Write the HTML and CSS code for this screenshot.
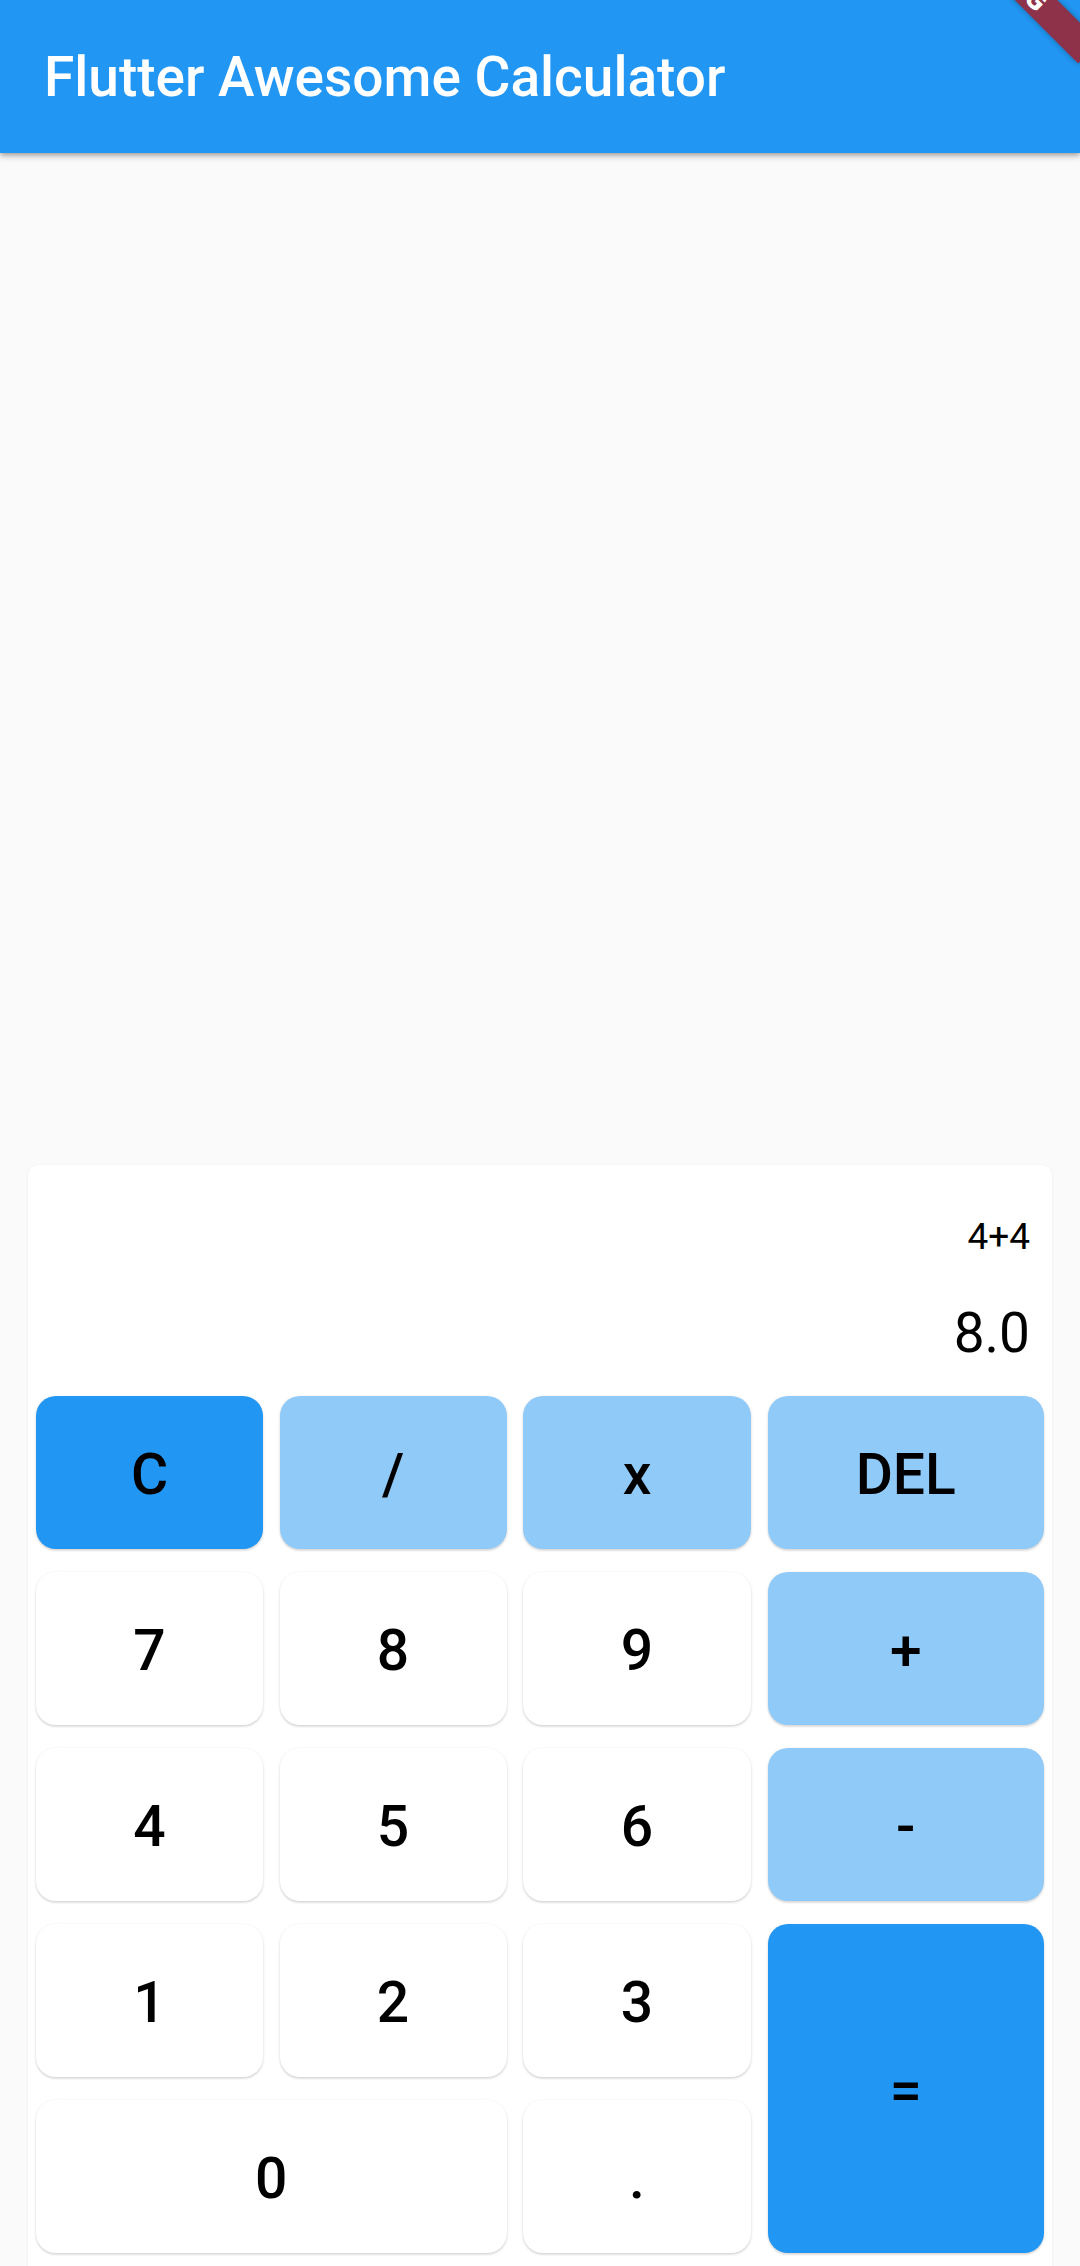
FILE: index.html
```html
<!DOCTYPE html>
<html lang="en">
<head>
<meta charset="utf-8">
<title>Flutter Awesome Calculator</title>
<link rel="stylesheet" href="styles.css">
</head>
<body>
<div class="screen">
  <header class="appbar">
    <h1 class="title">Flutter Awesome Calculator</h1>
  </header>
  <main class="content">
    <section class="calc">
      <div class="display">
        <div class="equation">4+4</div>
        <div class="result">8.0</div>
      </div>
      <div class="keys">
        <button class="key key-strong">C</button>
        <button class="key key-light">/</button>
        <button class="key key-light">x</button>
        <button class="key key-light">DEL</button>
        <button class="key">7</button>
        <button class="key">8</button>
        <button class="key">9</button>
        <button class="key key-light">+</button>
        <button class="key">4</button>
        <button class="key">5</button>
        <button class="key">6</button>
        <button class="key key-light">-</button>
        <button class="key">1</button>
        <button class="key">2</button>
        <button class="key">3</button>
        <button class="key key-strong key-tall">=</button>
        <button class="key key-wide">0</button>
        <button class="key">.</button>
      </div>
    </section>
  </main>
  <div class="debug-banner"><span>DEBUG</span></div>
</div>
</body>
</html>
```
FILE: styles.css
```css
* { box-sizing: border-box; }
html, body {
  margin: 0;
  padding: 0;
  background: #fafafa;
}
.screen {
  position: relative;
  width: 1080px;
  height: 2266px;
  overflow: hidden;
  display: flex;
  flex-direction: column;
  font-family: Roboto, "Noto Sans", "Liberation Sans", sans-serif;
  background: #fafafa;
}
.appbar {
  position: relative;
  z-index: 2;
  height: 153px;
  flex: 0 0 153px;
  background: #2196f3;
  display: flex;
  align-items: center;
  padding: 0 44px;
  box-shadow: 0 2px 4px -1px rgba(0,0,0,0.2), 0 4px 5px 0 rgba(0,0,0,0.14), 0 1px 10px 0 rgba(0,0,0,0.12);
}
.title {
  margin: 0;
  color: #ffffff;
  font-size: 55px;
  font-weight: 500;
  line-height: 64px;
  letter-spacing: 0;
}
.content {
  flex: 1 1 auto;
  display: flex;
  flex-direction: column;
}
.calc {
  margin: auto 28px 0;
  background: #ffffff;
  border-radius: 11px 11px 0 0;
  box-shadow: 0 1px 3px rgba(0,0,0,0.08);
  padding: 51px 8px 13px;
}
.display {
  display: flex;
  flex-direction: column;
  align-items: flex-end;
  padding-right: 14px;
}
.equation {
  font-size: 37px;
  line-height: 42px;
  color: #000;
}
.result {
  margin-top: 43px;
  font-size: 55px;
  line-height: 64px;
  color: #000;
}
.keys {
  margin-top: 31px;
  display: grid;
  grid-template-columns: 227px 227px 228px 1fr;
  grid-auto-rows: 153px;
  column-gap: 16.5px;
  row-gap: 23px;
}
.key {
  border: none;
  margin: 0;
  padding: 4px 0 0;
  border-radius: 20px;
  background: #ffffff;
  color: #000;
  font-family: Roboto, "Noto Sans", "Liberation Sans", sans-serif;
  font-size: 57px;
  font-weight: 500;
  line-height: 1;
  display: flex;
  align-items: center;
  justify-content: center;
  box-shadow: 0 1px 3px rgba(0,0,0,0.14), 0 2px 2px rgba(0,0,0,0.06);
}
.key-light { background: #90caf9; }
.key-strong { background: #2196f3; }
.key-tall { grid-row: span 2; }
.key-wide { grid-column: span 2; }
.debug-banner {
  position: absolute;
  z-index: 5;
  left: 901px;
  top: -40px;
  width: 220px;
  height: 30px;
  background: #8e3249;
  transform: rotate(45deg);
  display: flex;
  align-items: center;
  justify-content: center;
  box-shadow: 0 0 6px rgba(0,0,0,0.3);
}
.debug-banner span {
  color: #ffffff;
  font-family: Roboto, "Noto Sans", sans-serif;
  font-weight: 900;
  font-size: 28px;
  line-height: 1;
}
```
